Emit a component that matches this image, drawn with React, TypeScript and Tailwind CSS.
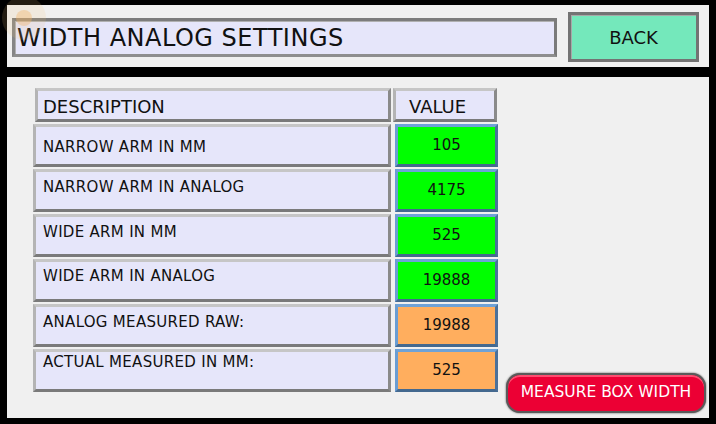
const rows = [
  { label: "NARROW ARM IN MM", value: "105", tone: "green", pad: "pt-[11px]" },
  { label: "NARROW ARM IN ANALOG", value: "4175", tone: "green", pad: "pt-[6px]" },
  { label: "WIDE ARM IN MM", value: "525", tone: "green", pad: "pt-[6px]" },
  { label: "WIDE ARM IN ANALOG", value: "19888", tone: "green", pad: "pt-[5px]" },
  { label: "ANALOG MEASURED RAW:", value: "19988", tone: "orange", pad: "pt-[6px]" },
  { label: "ACTUAL MEASURED IN MM:", value: "525", tone: "orange", pad: "pt-[1px]" },
];

const grayBevel =
  "border-[3px] border-t-[#c6c6c6] border-l-[#b4b4b4] border-b-[#7a7a7a] border-r-[#8a8a8a] bg-[#e6e6fa]";

export default function App() {
  return (
    <div
      className="relative flex h-[424px] w-[716px] flex-col gap-[10px] overflow-hidden bg-black px-[7px] pb-[6px] pt-[5px] text-[#111]"
      style={{ fontFamily: '"DejaVu Sans", Verdana, sans-serif' }}
    >
      {/* header bar */}
      <div className="flex h-[62px] shrink-0 items-start bg-[#f0f0f0] px-[5px]">
        <div className="mt-[13px] flex h-[39px] w-[545px] items-center border-[3px] border-t-[#7c7c7c] border-l-[#858585] border-b-[#8e8e8e] border-r-[#7a7a7a] bg-[#e6e6fa] pl-[2px] shadow-[inset_1px_1px_0_#b0b0b0]">
          <span className="text-[24px] leading-none tracking-[0.5px]">WIDTH ANALOG SETTINGS</span>
        </div>
        <button className="ml-[11px] mt-[7px] flex h-[50px] w-[131px] items-center justify-center border-[3px] border-[#737373] bg-[#74e8bb] text-[18px] shadow-[inset_1px_1px_0_#a8a8a8]">
          BACK
        </button>
      </div>

      {/* content */}
      <div className="flex min-h-0 flex-1 bg-[#f0f0f0]">
        <div className="flex flex-col gap-[2px] pl-[26px] pt-[11px]">
          <div className="ml-[2px] flex h-[34px] gap-[2px]">
            <div className={`${grayBevel} w-[356px] pl-[5px] pt-[5px] text-[18px] leading-[22px]`}>DESCRIPTION</div>
            <div className={`${grayBevel} w-[104px] pl-[13px] pt-[5px] text-[18px] leading-[22px]`}>VALUE</div>
          </div>
          {rows.map((r) => (
            <div key={r.label} className="flex h-[43px] gap-[4px]">
              <div className={`${grayBevel} w-[358px] pl-[7px] ${r.pad} text-[15px] leading-[18px] tracking-[0.3px]`}>
                {r.label}
              </div>
              <div
                className={`flex w-[103px] items-center justify-center border-[3px] border-t-[#6fa2d6] border-l-[#6a9dd2] border-b-[#44698f] border-r-[#4b719a] text-[15px] ${
                  r.tone === "green" ? "bg-[#00ff00]" : "bg-[#ffae5e]"
                }`}
              >
                {r.value}
              </div>
            </div>
          ))}
        </div>
        <button className="mb-[5px] ml-auto mr-[3px] flex h-[40px] w-[200px] items-center justify-center self-end rounded-[14px] border-[2px] border-[#5a5a5a] bg-[#ec0034] text-[15.5px] text-white shadow-[0_0_2px_#444,inset_0_2px_0_#ff4d70]">
          MEASURE BOX WIDTH
        </button>
      </div>

      {/* touch ripple overlay */}
      <div className="pointer-events-none absolute left-[2px] top-[-4px] h-[44px] w-[44px] rounded-full bg-[#f3c27a]/15" />
      <div className="pointer-events-none absolute left-[16px] top-[10px] h-[16px] w-[16px] rounded-full bg-[#f3b46a]/40" />
    </div>
  );
}
